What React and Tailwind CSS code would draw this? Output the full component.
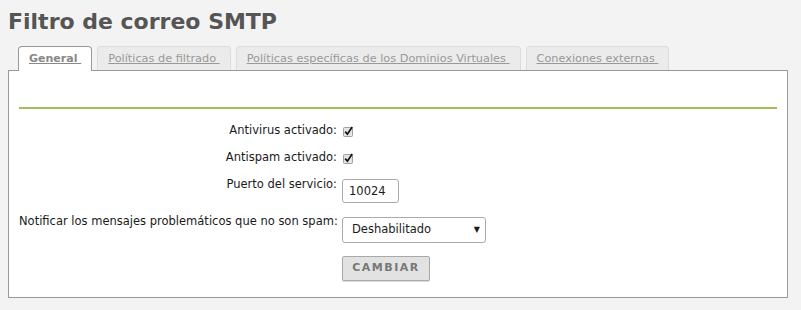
import React from 'react';

const CheckBox = () => (
    <svg width="13" height="12" viewBox="0 0 13 12" className="block">
        <rect x="1.5" y="2.5" width="9" height="9" rx="1" fill="#e4e4e4" stroke="#a0a0a0" />
        <path d="M3.2 6.6 L5.4 9.2 L10.2 2" fill="none" stroke="#111" strokeWidth="1.7" />
    </svg>
);

const tabs = [
    { label: 'General', active: true },
    { label: 'Políticas de filtrado', active: false },
    { label: 'Políticas específicas de los Dominios Virtuales', active: false },
    { label: 'Conexiones externas', active: false },
];

export default function App() {
    return (
        <div className="min-h-[310px] w-[801px] bg-[#f3f3f3] px-2 font-['DejaVu_Sans',sans-serif] text-[11.5px] text-[#1a1a1a]">
            {/* Title */}
            <h1 className="pt-[11px] text-[22px] font-bold leading-[22px] text-[#555]">Filtro de correo SMTP</h1>

            {/* Tabs */}
            <div className="mt-[13px] flex gap-[5px] pl-[10px]">
                {tabs.map((tab) => (
                    <div
                        key={tab.label}
                        className={`h-[24px] whitespace-nowrap rounded-t-[4px] border border-b-0 px-[10px] leading-[23px] ${tab.active
                            ? 'relative z-10 -mb-px h-[25px] border-[#999] bg-white text-[11px] font-bold text-[#888]'
                            : 'border-[#dcdcdc] bg-[#ebebeb] text-[11.3px] text-[#999]'
                            }`}
                    >
                        <span className="underline whitespace-pre">{tab.label + ' '}</span>
                    </div>
                ))}
            </div>

            {/* Panel */}
            <div className="h-[228px] w-[780px] border border-[#999] bg-white">
                <div className="mx-[10px] h-[38px] border-b-2 border-[#a3be5a]"></div>

                <div className="mx-[10px] pt-[11px]">
                    <div className="flex h-[27px] items-start gap-[5px]">
                        <div className="w-[318px] whitespace-nowrap pt-[4px] text-right leading-[13px]">Antivirus activado:</div>
                        <div className="pt-[5px]"><CheckBox /></div>
                    </div>
                    <div className="flex h-[27px] items-start gap-[5px]">
                        <div className="w-[318px] whitespace-nowrap pt-[4px] text-right leading-[13px]">Antispam activado:</div>
                        <div className="pt-[5px]"><CheckBox /></div>
                    </div>
                    <div className="flex h-[38px] items-start gap-[5px]">
                        <div className="w-[318px] whitespace-nowrap pt-[4px] text-right leading-[13px]">Puerto del servicio:</div>
                        <div className="pt-[5px]">
                            <div className="box-border h-[24px] w-[57px] rounded-[3px] border border-[#aaa] bg-white pl-[6px] leading-[22px]">10024</div>
                        </div>
                    </div>
                    <div className="flex h-[39px] items-start gap-[5px]">
                        <div className="w-[318px] whitespace-nowrap pt-[3px] text-right leading-[13px]">Notificar los mensajes problemáticos que no son spam:</div>
                        <div className="pt-[5px]">
                            <div className="flex h-[26px] w-[144px] items-center justify-between rounded-[3px] border border-[#aaa] bg-white pl-[9px] pr-[5px]">
                                <span>Deshabilitado</span>
                                <span className="text-[8px] leading-none">▼</span>
                            </div>
                        </div>
                    </div>
                    <div className="flex items-start gap-[5px]">
                        <div className="w-[318px]"></div>
                        <div className="pt-[5px]">
                            <button className="h-[25px] w-[88px] rounded-[2px] border border-[#a9a9a9] bg-[#e2e2e2] text-[11px] font-bold tracking-[1.5px] text-[#777] shadow-[0_1px_1px_rgba(0,0,0,0.15)]">
                                CAMBIAR
                            </button>
                        </div>
                    </div>
                </div>
            </div>
        </div>
    );
}
